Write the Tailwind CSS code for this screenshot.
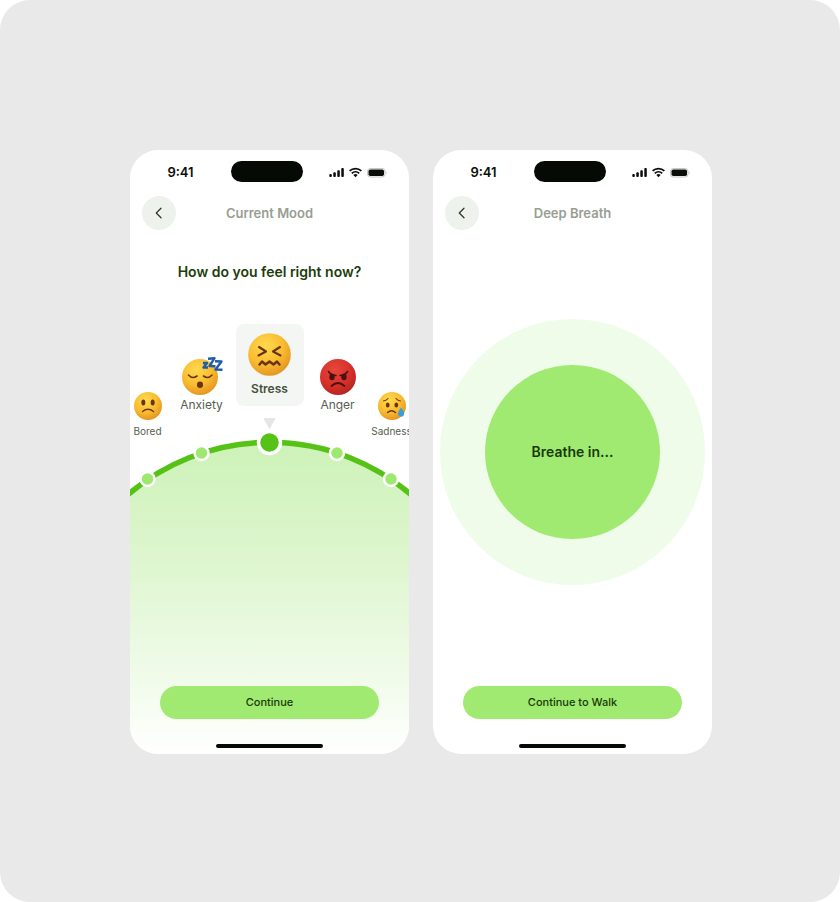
<!DOCTYPE html>
<html lang="en">
<head>
  <meta charset="UTF-8" />
  <meta name="viewport" content="width=device-width, initial-scale=1.0" />
  <title>Mood Tracker</title>
  <script src="https://cdn.jsdelivr.net/npm/@tailwindcss/browser@4"></script>
</head>
<body class="bg-white font-['Inter',sans-serif]">
  <!-- Shared gradients and icons -->
  <svg class="absolute size-0" aria-hidden="true">
    <defs>
      <radialGradient id="face-yellow" cx="0.4" cy="0.3" r="0.75">
        <stop offset="0" stop-color="#ffd94f" />
        <stop offset="0.55" stop-color="#f9bd31" />
        <stop offset="1" stop-color="#e3901f" />
      </radialGradient>
      <radialGradient id="face-red" cx="0.4" cy="0.3" r="0.75">
        <stop offset="0" stop-color="#e8473b" />
        <stop offset="0.6" stop-color="#d6302a" />
        <stop offset="1" stop-color="#b3231f" />
      </radialGradient>
      <symbol id="status-icons" viewBox="0 0 58 12">
        <g fill="#0a0d08">
          <rect x="0.300" y="8" width="2.500" height="3" rx="0.900" />
          <rect x="4.300" y="6.300" width="2.500" height="4.700" rx="0.900" />
          <rect x="8.300" y="4.200" width="2.500" height="6.800" rx="0.900" />
          <rect x="12.300" y="2" width="2.500" height="9" rx="0.900" />
          <path d="M26.500 11.200l-2.100-2.200a3 3 0 0 1 4.200 0z" />
        </g>
        <g fill="none" stroke="#0a0d08" stroke-width="1.700">
          <path d="M20.600 4.900a8.600 8.600 0 0 1 11.800 0" />
          <path d="M22.800 7.400a5.400 5.400 0 0 1 7.400 0" />
        </g>
        <rect x="38.500" y="2.500" width="17.500" height="8.500" rx="2.800" fill="none" stroke="#c3c8c1" />
        <rect x="39.500" y="3.500" width="15.500" height="6.500" rx="1.800" fill="#0a0d08" />
        <path d="M56.700 5.300v3c1.200-0.300 1.200-2.700 0-3z" fill="#c3c8c1" />
      </symbol>
      <symbol id="chevron-left" viewBox="0 0 12 12">
        <path d="M8 1.300L3.300 6l4.700 4.700" fill="none" stroke="#2d3a26" stroke-width="1.300" stroke-linecap="round" stroke-linejoin="round" />
      </symbol>
    </defs>
  </svg>

  <div class="flex min-h-screen items-center justify-center rounded-[30px] bg-[#e9e9e9] pt-0.5 pl-0.5">
    <div class="grid w-full max-w-[582px] grid-cols-2 gap-6">

      <!-- Current mood -->
      <section class="relative flex aspect-[279/604] flex-col overflow-hidden rounded-[28px] bg-white">
        <svg class="absolute inset-x-0 bottom-0 w-full" viewBox="0 0 279 336" aria-hidden="true">
          <defs>
            <linearGradient id="dial-fill" x1="0" y1="24" x2="0" y2="336" gradientUnits="userSpaceOnUse">
              <stop offset="0" stop-color="#cdf2b8" />
              <stop offset="0.3" stop-color="#daf5ca" />
              <stop offset="0.75" stop-color="#f0fbe9" />
              <stop offset="1" stop-color="#ffffff" />
            </linearGradient>
          </defs>
          <path d="M0 336V74.500A218 218 0 0 1 279 74.500V336z" fill="url(#dial-fill)" />
          <path d="M-6 80A218 218 0 0 1 285 80" fill="none" stroke="#56c216" stroke-width="5.500" />
          <path d="M134 0.500h11l-5.500 10z" fill="#e6e7e5" stroke="#e6e7e5" stroke-linejoin="round" />
          <g fill="#9de96f" stroke="#fff" stroke-width="2.500">
            <circle cx="17.500" cy="61" r="7" />
            <circle cx="71.500" cy="35" r="7" />
            <circle cx="207" cy="35" r="7" />
            <circle cx="261" cy="61" r="7" />
          </g>
          <circle cx="139.500" cy="24.500" r="11" fill="#56c216" stroke="#fff" stroke-width="3.500" />
        </svg>

        <div class="relative mt-[11px] grid grid-cols-[101fr_72px_106fr] items-center">
          <span class="pt-px text-center text-[13px] leading-5 font-semibold text-[#0a0d08]">9:41</span>
          <span class="h-[21px] rounded-full bg-[#050b04]"></span>
          <svg class="mr-[22px] ml-auto h-3 w-[58px]" role="img" aria-label="Signal, Wi-Fi and battery"><use href="#status-icons" /></svg>
        </div>

        <header class="relative mt-[14px] grid grid-cols-[34px_1fr_34px] items-center px-3">
          <button class="grid size-[34px] place-items-center rounded-full bg-[#eef2ed]" type="button" aria-label="Back">
            <svg class="size-3"><use href="#chevron-left" /></svg>
          </button>
          <h1 class="text-center text-[13px] leading-5 font-semibold text-[#979d93]">Current Mood</h1>
        </header>

        <h2 class="relative mt-[30px] text-center text-sm leading-6 font-semibold text-[#1d3d0c]">How do you feel right now?</h2>

        <div class="relative mt-10 flex justify-center text-[#555e51]">
          <button class="flex w-10 shrink-0 flex-col items-center pt-[68px]" type="button">
            <svg class="size-7" viewBox="0 0 28 28">
              <circle cx="14" cy="14" r="14" fill="url(#face-yellow)" />
              <g fill="#6b3410">
                <ellipse cx="9.300" cy="10.600" rx="2" ry="3" />
                <ellipse cx="18.700" cy="10.600" rx="2" ry="3" />
              </g>
              <path d="M8.500 19.500q5.500-4.500 11 0" fill="none" stroke="#6b3410" stroke-width="1.400" stroke-linecap="round" />
            </svg>
            <span class="mt-[3px] text-[10px] leading-4">Bored</span>
          </button>

          <button class="flex w-[68px] shrink-0 flex-col items-center pt-[35px]" type="button">
            <svg class="size-9 overflow-visible" viewBox="0 0 36 36">
              <circle cx="16" cy="18" r="18" fill="url(#face-yellow)" />
              <g fill="none" stroke="#6b3410" stroke-width="1.600" stroke-linecap="round">
                <path d="M4.500 16q4 4.500 8.500 1" />
                <path d="M19.500 17q4.500 3.500 8.500-1" />
              </g>
              <ellipse cx="16" cy="25.800" rx="3" ry="3.200" fill="#6b3410" />
              <g fill="none" stroke="#1f5cab" stroke-width="2.400" stroke-linejoin="round">
                <path d="M19 4h4L19.500 8.500h4.500" />
                <path d="M24 -0.300l6.500 -0.500L25.500 7l6 0.200" />
                <path d="M31 2.300l6.500 0.200L31.500 10.500l7 0.300" />
              </g>
            </svg>
            <span class="text-xs leading-5">Anxiety</span>
          </button>

          <button class="flex w-[68px] shrink-0 flex-col items-center self-start rounded-lg bg-[#f4f6f4] pt-[9px] pb-[7px]" type="button" aria-pressed="true">
            <svg class="size-[43px]" viewBox="0 0 43 43">
              <circle cx="21.500" cy="21.500" r="21.300" fill="url(#face-yellow)" />
              <g fill="none" stroke="#6b3410" stroke-width="2.100" stroke-linecap="round" stroke-linejoin="round">
                <path d="M11 14l7 4.500-7.500 4" />
                <path d="M32 14l-7 4.500 7.500 4" />
                <path d="M11.500 31.500l2.500-3 3.500 3 4-3 4 3 3.500-3 2.500 3" stroke-width="2.400" />
              </g>
            </svg>
            <span class="mt-[3px] text-xs leading-5 font-semibold text-[#44523b]">Stress</span>
          </button>

          <button class="flex w-[68px] shrink-0 flex-col items-center pt-[35px]" type="button">
            <svg class="size-9" viewBox="0 0 36 36">
              <circle cx="18" cy="18" r="18" fill="url(#face-red)" />
              <g fill="#4a1210">
                <ellipse cx="12" cy="18" rx="2.700" ry="3.200" />
                <ellipse cx="24" cy="18" rx="2.700" ry="3.200" />
              </g>
              <g fill="none" stroke="#4a1210" stroke-linecap="round">
                <path d="M8.500 12.500q2 3.500 7.500 4" stroke-width="1.600" />
                <path d="M27.500 12.500q-2 3.500-7.500 4" stroke-width="1.600" />
                <path d="M11.500 27q6.500-6 13 0" stroke-width="1.800" />
              </g>
            </svg>
            <span class="text-xs leading-5">Anger</span>
          </button>

          <button class="flex w-10 shrink-0 flex-col items-center pt-[68px]" type="button">
            <svg class="size-7" viewBox="0 0 28 28">
              <circle cx="14" cy="14" r="14" fill="url(#face-yellow)" />
              <g fill="#6b3410">
                <ellipse cx="9.700" cy="13" rx="1.900" ry="2.500" />
                <ellipse cx="18.300" cy="13" rx="1.900" ry="2.500" />
              </g>
              <g fill="none" stroke="#6b3410" stroke-linecap="round">
                <path d="M5.500 9q3-0.500 4.500-2.500" stroke-width="1.100" />
                <path d="M22.500 9q-3-0.500-4.500-2.500" stroke-width="1.100" />
                <path d="M9.500 20.500q4-3.500 8 0" stroke-width="1.400" />
              </g>
              <path d="M23 15.500c1.800 2.600 3.200 4.200 3.200 6a3.100 3.100 0 0 1-6.200 0c0-1.800 1.600-3.400 3-6z" fill="#3b9fd6" />
            </svg>
            <span class="mt-[3px] text-[10px] leading-4">Sadness</span>
          </button>
        </div>

        <footer class="relative mt-auto flex flex-col items-center px-[30px] pb-1.5">
          <button class="h-[33px] w-full rounded-full bg-[#a0ea71] text-[11px] font-medium text-[#183a08]" type="button">Continue</button>
          <span class="mt-[25px] h-1 w-[107px] rounded-full bg-[#050b04]"></span>
        </footer>
      </section>

      <!-- Deep breath -->
      <section class="flex aspect-[279/604] flex-col overflow-hidden rounded-[28px] bg-white">
        <div class="mt-[11px] grid grid-cols-[101fr_72px_106fr] items-center">
          <span class="pt-px text-center text-[13px] leading-5 font-semibold text-[#0a0d08]">9:41</span>
          <span class="h-[21px] rounded-full bg-[#050b04]"></span>
          <svg class="mr-[22px] ml-auto h-3 w-[58px]" role="img" aria-label="Signal, Wi-Fi and battery"><use href="#status-icons" /></svg>
        </div>

        <header class="mt-[14px] grid grid-cols-[34px_1fr_34px] items-center px-3">
          <button class="grid size-[34px] place-items-center rounded-full bg-[#eef2ed]" type="button" aria-label="Back">
            <svg class="size-3"><use href="#chevron-left" /></svg>
          </button>
          <h1 class="text-center text-[13px] leading-5 font-semibold text-[#979d93]">Deep Breath</h1>
        </header>

        <div class="flex flex-1 items-center justify-center pb-3">
          <div class="grid aspect-square w-[95%] place-items-center rounded-full bg-[#effcea]">
            <div class="grid aspect-square w-[66%] place-items-center rounded-full bg-[#a0ea71]">
              <p class="text-sm leading-6 font-semibold text-[#183a08]">Breathe in...</p>
            </div>
          </div>
        </div>

        <footer class="flex flex-col items-center px-[30px] pb-1.5">
          <button class="h-[33px] w-full rounded-full bg-[#a0ea71] text-[11px] font-medium text-[#183a08]" type="button">Continue to Walk</button>
          <span class="mt-[25px] h-1 w-[107px] rounded-full bg-[#050b04]"></span>
        </footer>
      </section>

    </div>
  </div>
</body>
</html>
